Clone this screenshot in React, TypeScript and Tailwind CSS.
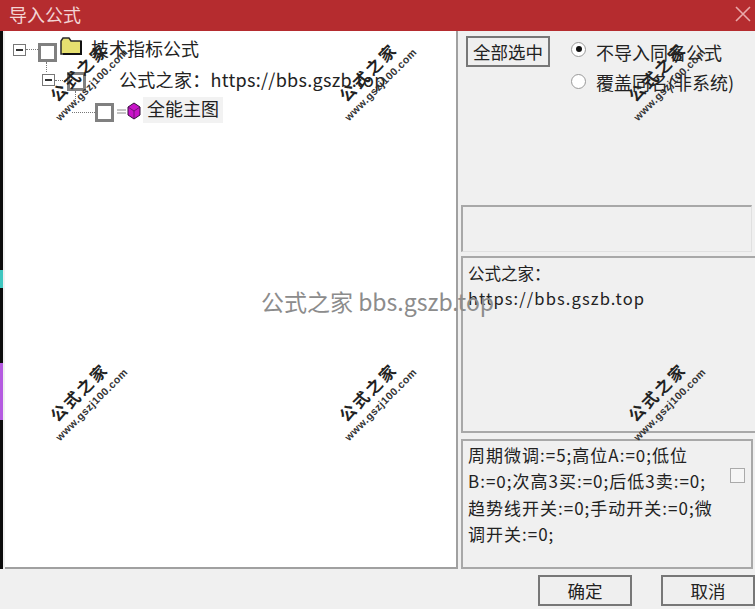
import React from 'react';

const FONT = 'font-["Noto_Sans_CJK_SC","Noto_Sans",sans-serif]';

// diagonal stamp that sits over the whole dialog
const Watermark = ({ x, y }: { x: number; y: number }) => (
  <div
    className="absolute w-[120px] h-[42px] -rotate-45 flex flex-col items-center pointer-events-none text-[#222]"
    style={{ left: x - 60, top: y - 21 }}
  >
    <div className='font-["Noto_Sans_CJK_SC",sans-serif] font-bold text-[16px] leading-[24px] tracking-[2.5px]'>公式之家</div>
    <div className='font-["Liberation_Sans",sans-serif] text-[10.5px] leading-[13px] tracking-[0.5px] font-bold text-[#333]'>www.gszj100.com</div>
  </div>
);

const TreeCheck = ({ mt, tail }: { mt: string; tail?: boolean }) => (
  <div className={`relative w-[19px] h-[19px] border-[3px] border-[#808080] bg-white shrink-0 ${mt}`}>
    {tail && <div className="absolute left-[5px] top-[16px] h-[10px] border-l border-dotted border-[#777]" />}
  </div>
);

const Expander = ({ mt }: { mt: string }) => (
  <div className={`w-[13px] h-[12px] border border-[#777] bg-white flex items-center justify-center shrink-0 ${mt}`}>
    <div className="w-[7px] h-[2px] bg-[#333]" />
  </div>
);

const Dots = ({ w, mt }: { w: string; mt: string }) => (
  <div className={`${w} ${mt} border-t border-dotted border-[#777] shrink-0`} />
);

const DialogButton = ({ label, w }: { label: string; w: string }) => (
  <button className={`${w} h-[31px] border-2 border-[#777] bg-[#efefef] text-[17.5px] leading-none text-[#222]`}>
    {label}
  </button>
);

const App: React.FC = () => {
  return (
    <div className={`relative w-[755px] h-[609px] overflow-hidden bg-[#f0f0f0] text-[#222] ${FONT}`}>
      {/* Title bar */}
      <div className="h-[31px] bg-[#b52c2f] flex items-center justify-between pl-[9px] pr-[3px]">
        <span className="text-[18px] leading-none mb-[3px] text-[#f3d5d5]">导入公式</span>
        <svg width="16" height="16" viewBox="0 0 16 16" className="mr-[1px] mb-[3px]">
          <path d="M1 1 L15 15 M15 1 L1 15" stroke="#e9a9aa" strokeWidth="1.6" fill="none" />
        </svg>
      </div>

      <div className="flex h-[538px]">
        {/* Desktop edge peeking through on the left */}
        <div className="w-[3px] bg-[#0c0c0c] flex flex-col shrink-0">
          <div className="h-[239px]" />
          <div className="h-[18px] bg-[#3fc6c0]" />
          <div className="h-[75px]" />
          <div className="h-[57px] bg-[#b45ae0]" />
        </div>

        {/* Tree */}
        <div className="w-[453px] ml-[2px] h-[538px] bg-white border-r-2 border-b-2 border-[#a0a0a0] pt-[6px] shrink-0">
          <div className="flex items-start h-[26px] pl-[8px]">
            <Expander mt="mt-[7px]" />
            <Dots w="w-[12px]" mt="mt-[12px]" />
            <TreeCheck mt="mt-[6px]" tail />
            <svg width="23" height="19" viewBox="0 0 23 19" className="ml-[3px] shrink-0">
              <path d="M1 17 V4 L3 1 H9 L11 4 H21 V17 Z" fill="#e6e070" stroke="#2a2a2a" strokeWidth="1.5" />
              <path d="M21 4 V17 H3" fill="none" stroke="#111" strokeWidth="2" />
            </svg>
            <span className="ml-[8px] text-[18px] leading-[22px]">技术指标公式</span>
          </div>
          <div className="flex items-start h-[30px] pl-[37px]">
            <Expander mt="mt-[11px]" />
            <Dots w="w-[12px]" mt="mt-[17px]" />
            <TreeCheck mt="mt-[9px]" tail />
            <span className="ml-[33px] mt-[5px] text-[18px] leading-[22px] tracking-[0.3px] whitespace-nowrap">公式之家：https://bbs.gszb.top</span>
          </div>
          <div className="flex items-start h-[30px] pl-[67px]">
            <Dots w="w-[23px]" mt="mt-[19px]" />
            <TreeCheck mt="mt-[10px]" />
            <svg width="25" height="18" viewBox="0 0 25 18" className="ml-[2px] mt-[9px] shrink-0">
              <path d="M1 8 H10 M1 11 H10" stroke="#888" strokeWidth="1" />
              <path d="M18 1 L24 5 V13 L18 17 L12 13 V5 Z" fill="#c814c8" stroke="#33103a" strokeWidth="1" />
              <path d="M12 5 L18 9 L24 5 M18 9 V17" fill="none" stroke="#5c0f60" strokeWidth="0.8" />
            </svg>
            <span className="ml-[2px] mt-[4px] px-[4px] h-[26px] pb-[4px] bg-[#f2f2f2] flex items-center text-[18px] leading-none">全能主图</span>
          </div>
        </div>

        {/* Right column */}
        <div className="flex-1 pl-[3px] flex flex-col min-w-0">
          <div className="h-[174px] flex items-start pl-[5px] pt-[5px]">
            <button className="w-[84px] h-[31px] border-2 border-[#777] bg-[#efefef] text-[17.5px] leading-none shrink-0">全部选中</button>
            <div className="ml-[21px] flex flex-col">
              <div className="flex items-center h-[32px]">
                <div className="w-[15px] h-[15px] mb-[6px] rounded-full border border-[#999] bg-white flex items-center justify-center">
                  <div className="w-[6px] h-[6px] rounded-full bg-[#111]" />
                </div>
                <span className="ml-[10px] text-[18px] leading-none whitespace-nowrap">不导入同名公式</span>
              </div>
              <div className="flex items-center h-[28px]">
                <div className="w-[15px] h-[15px] mb-[2px] rounded-full border border-[#999] bg-white" />
                <span className="ml-[10px] text-[18px] leading-none whitespace-nowrap">覆盖同名(非系统)</span>
              </div>
            </div>
          </div>

          <div className="w-[291px] h-[47px] border-t-2 border-l-2 border-r border-b border-t-[#a8a8a8] border-l-[#a8a8a8] border-r-[#e0e0e0] border-b-[#e0e0e0]" />

          <div className="mt-[4px] h-[177px] border-t-2 border-l-2 border-b-2 border-[#a8a8a8] pl-[5px] pt-[3px] text-[16.5px] leading-[25px]">
            <div>公式之家：</div>
            <div className="whitespace-nowrap tracking-[1.1px]">https://bbs.gszb.top</div>
          </div>

          <div className="mt-[6px] w-[292px] h-[130px] border-2 border-[#a8a8a8] flex pl-[5px] pt-[1px]">
            <div className="w-[255px] text-[17px] leading-[26.4px] tracking-[1px] whitespace-nowrap shrink-0">
              <div>周期微调:=5;高位A:=0;低位</div>
              <div>B:=0;次高3买:=0;后低3卖:=0;</div>
              <div>趋势线开关:=0;手动开关:=0;微</div>
              <div>调开关:=0;</div>
            </div>
            <div className="ml-[7px] mt-[26px] w-[15px] h-[15px] border border-[#aaa] bg-[#f6f6f6] shrink-0" />
          </div>
        </div>
      </div>

      {/* Footer buttons */}
      <div className="h-[40px] flex justify-end items-start pt-[6px] gap-[29px]">
        <DialogButton label="确定" w="w-[94px]" />
        <DialogButton label="取消" w="w-[94px]" />
      </div>

      {/* Overlays */}
      <div className="absolute left-[261px] top-[286px] text-[23px] leading-[30px] text-[#8c8c8c] whitespace-nowrap">
        公式之家 bbs.gszb.top
      </div>
      <Watermark x={85} y={78} />
      <Watermark x={374} y={78} />
      <Watermark x={663} y={78} />
      <Watermark x={85} y={398} />
      <Watermark x={374} y={398} />
      <Watermark x={663} y={398} />
    </div>
  );
};

export default App;
